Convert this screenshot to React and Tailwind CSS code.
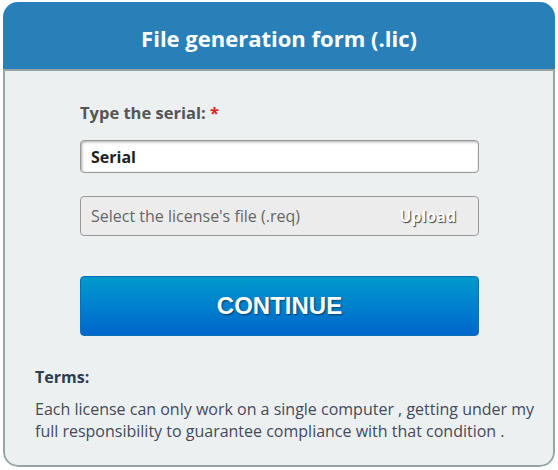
export default function App() {
  return (
    <div className="w-[558px] h-[470px] bg-white pt-[2px] px-[3px] font-['Open_Sans',sans-serif]">
      <div className="w-[552px] rounded-[15px] overflow-hidden">
        {/* HEADER */}
        <div className="h-[67px] bg-[#2980b9] flex items-center justify-center pt-[5px]">
          <h1 className="text-white text-[22px] font-bold leading-none">File generation form (.lic)</h1>
        </div>

        {/* BODY */}
        <div className="h-[398px] bg-[#ecf0f1] border-2 border-[#95a5a6] rounded-b-[15px] pl-[30px] pr-[14px]">
          <div className="pl-[45px] pr-[60px] pt-[32px]">
            <label className="block text-[16.5px] font-bold text-[#555] leading-[20px]">
              Type the serial: <span className="text-[#e02020]">*</span>
            </label>

            <div className="mt-[17px] h-[33px] bg-white border border-[#999] rounded-[4px] shadow-[inset_1px_1px_3px_rgba(0,0,0,0.35)] flex items-center px-[10px]">
              <span className="text-[16px] font-bold text-[#222]">Serial</span>
            </div>

            <div className="mt-[23px] h-[40px] bg-[#ececec] border border-[#999] rounded-[4px] flex items-center justify-between pl-[10px] pr-[22px]">
              <span className="text-[16px] text-[#666]">Select the license's file (.req)</span>
              <span className="text-[16px] font-bold text-white [text-shadow:1px_1px_1px_rgba(0,0,0,0.75)]">Upload</span>
            </div>

            <button className="mt-[40px] w-full h-[60px] rounded-[4px] bg-gradient-to-b from-[#0099cc] to-[#0066cc] border border-[#0a6fb5] flex items-center justify-center">
              <span className="text-white text-[24px] font-bold font-['Liberation_Sans',Arial,sans-serif] [text-shadow:1px_1px_2px_rgba(0,0,0,0.5)]">CONTINUE</span>
            </button>
          </div>

          <div className="pt-[31px]">
            <h3 className="text-[16px] font-bold text-[#2c3e50] leading-[20px]">Terms:</h3>
            <p className="mt-[11px] text-[16px] text-[#444a5a] leading-[22px]">
              Each license can only work on a single computer , getting under my full responsibility to guarantee compliance with that condition .
            </p>
          </div>
        </div>
      </div>
    </div>
  );
}
